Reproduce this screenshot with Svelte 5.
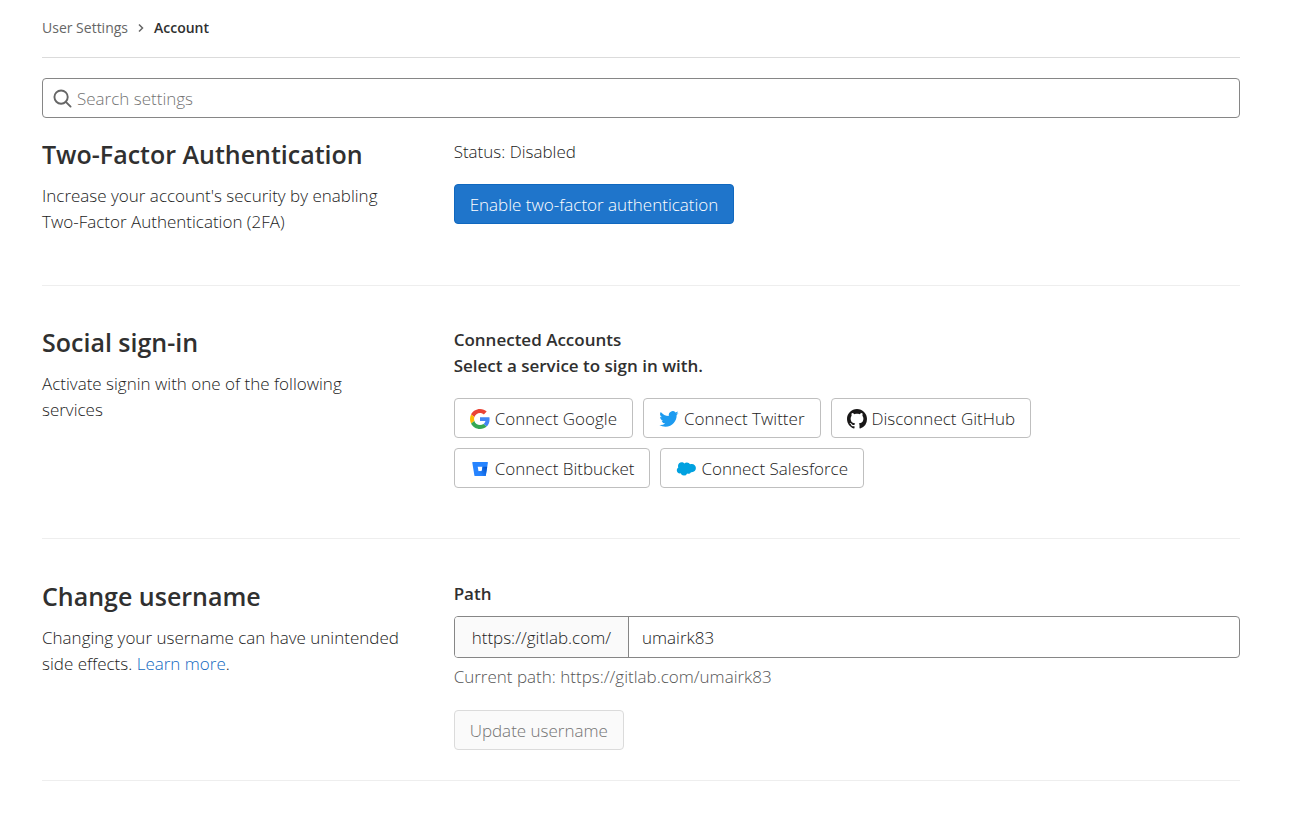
<script lang="ts">
	type Provider = {
		id: string;
		label: string;
	};

	const providers: Provider[] = [
		{ id: "google", label: "Connect Google" },
		{ id: "twitter", label: "Connect Twitter" },
		{ id: "github", label: "Disconnect GitHub" },
		{ id: "bitbucket", label: "Connect Bitbucket" },
		{ id: "salesforce", label: "Connect Salesforce" },
	];

	const rootUrl = "https://gitlab.com/";
	const currentUsername = "umairk83";

	let search = $state("");
	let username = $state(currentUsername);
	const unchanged = $derived(username === currentUsername);
</script>

{#snippet logo(id: string)}
	{#if id === "google"}
		<svg class="logo" viewBox="0 0 48 48" aria-hidden="true">
			<path fill="#ea4335" d="M24 9.5c3.54 0 6.71 1.22 9.21 3.6l6.85-6.85C35.9 2.38 30.47 0 24 0 14.62 0 6.51 5.38 2.56 13.22l7.98 6.19C12.43 13.72 17.74 9.5 24 9.5z" />
			<path fill="#4285f4" d="M46.98 24.55c0-1.57-.15-3.09-.38-4.55H24v9.02h12.94c-.58 2.96-2.26 5.48-4.78 7.18l7.73 6c4.51-4.18 7.09-10.36 7.09-17.65z" />
			<path fill="#fbbc05" d="M10.53 28.59c-.48-1.45-.76-2.99-.76-4.59s.27-3.14.76-4.59l-7.98-6.19C.92 16.46 0 20.12 0 24c0 3.88.92 7.54 2.56 10.78l7.97-6.19z" />
			<path fill="#34a853" d="M24 48c6.48 0 11.93-2.13 15.89-5.81l-7.73-6c-2.15 1.45-4.92 2.3-8.16 2.3-6.26 0-11.57-4.22-13.47-9.91l-7.98 6.19C6.51 42.62 14.62 48 24 48z" />
		</svg>
	{:else if id === "twitter"}
		<svg class="logo" viewBox="-0.5 -0.5 25 25" aria-hidden="true">
			<path fill="#1d9bf0" d="M23.95 4.57a10 10 0 0 1-2.82.77 4.96 4.96 0 0 0 2.16-2.72c-.95.56-2 .96-3.13 1.18a4.92 4.92 0 0 0-8.38 4.48C7.69 8.1 4.07 6.13 1.64 3.16a4.92 4.92 0 0 0 1.52 6.57 4.9 4.9 0 0 1-2.23-.61v.06a4.92 4.92 0 0 0 3.95 4.83 5 5 0 0 1-2.21.08 4.94 4.94 0 0 0 4.6 3.42A9.87 9.87 0 0 1 0 19.54a13.99 13.99 0 0 0 7.55 2.21c9.05 0 14-7.5 14-13.98 0-.21 0-.42-.02-.63a9.94 9.94 0 0 0 2.42-2.57z" />
		</svg>
	{:else if id === "github"}
		<svg class="logo" viewBox="0 0 16 16" aria-hidden="true">
			<path fill="#191717" d="M8 0C3.58 0 0 3.58 0 8c0 3.54 2.29 6.53 5.47 7.59.4.07.55-.17.55-.38 0-.19-.01-.82-.01-1.49-2.01.37-2.53-.49-2.69-.94-.09-.23-.48-.94-.82-1.13-.28-.15-.68-.52-.01-.53.63-.01 1.08.58 1.23.82.72 1.21 1.87.87 2.33.66.07-.52.28-.87.51-1.07-1.78-.2-3.64-.89-3.64-3.95 0-.87.31-1.59.82-2.15-.08-.2-.36-1.02.08-2.12 0 0 .67-.21 2.2.82.64-.18 1.32-.27 2-.27s1.36.09 2 .27c1.53-1.04 2.2-.82 2.2-.82.44 1.1.16 1.92.08 2.12.51.56.82 1.27.82 2.15 0 3.07-1.87 3.75-3.65 3.95.29.25.54.73.54 1.48 0 1.07-.01 1.93-.01 2.2 0 .21.15.46.55.38A8.01 8.01 0 0 0 16 8c0-4.42-3.58-8-8-8z" />
		</svg>
	{:else if id === "bitbucket"}
		<svg class="logo" viewBox="0 0 20 20" aria-hidden="true">
			<defs>
				<linearGradient id="bucket-shade" x1="17" y1="7" x2="9" y2="14" gradientUnits="userSpaceOnUse">
					<stop offset="0.15" stop-color="#0052cc" />
					<stop offset="1" stop-color="#2684ff" />
				</linearGradient>
			</defs>
			<path fill="#2684ff" d="M2.8 3h14.6c.4 0 .6.3.5.7l-2.1 12.7c0 .4-.3.6-.7.6H5.2c-.4 0-.7-.3-.8-.6L2.3 3.7c-.1-.4.1-.7.5-.7zm5.7 9.2h3.2l.8-4.5H7.7z" />
			<path fill="url(#bucket-shade)" d="M17.2 7.7h-4.7l-.8 4.5H8.5l-3.7 4.6c.1.1.3.2.5.2h9.8c.4 0 .7-.2.7-.6z" />
		</svg>
	{:else}
		<svg class="logo" viewBox="0 0 20 20" aria-hidden="true">
			<path fill="#00a1e0" d="M8.3 4.5A3.6 3.6 0 0 1 10.9 3.4c1.4 0 2.6.8 3.2 1.9.5-.2 1.1-.4 1.7-.4 2.3 0 4.1 1.9 4.1 4.2s-1.8 4.2-4.1 4.2l-.8-.1a3 3 0 0 1-3.9 1.2 3.4 3.4 0 0 1-6.4-.1l-.7.1A3.3 3.3 0 0 1 .8 11.2c0-1.2.6-2.2 1.5-2.8-.2-.4-.3-.9-.3-1.4 0-2.1 1.7-3.7 3.7-3.7 1.1 0 2.1.5 2.6 1.2z" />
		</svg>
	{/if}
{/snippet}

<main class="page">
	<nav class="breadcrumbs" aria-label="Breadcrumbs">
		<a class="crumb" href="#profile">User Settings</a>
		<svg class="chevron" viewBox="0 0 10 10" aria-hidden="true">
			<path d="M3 1.5 6.5 5 3 8.5" />
		</svg>
		<a class="crumb current" href="#account" aria-current="page">Account</a>
	</nav>

	<div class="search">
		<svg class="search-icon" viewBox="0 0 20 20" aria-hidden="true">
			<circle cx="8.5" cy="8.5" r="7" />
			<path d="m13.5 13.5 5 5" />
		</svg>
		<input type="search" placeholder="Search settings" aria-label="Search settings" bind:value={search} />
	</div>

	<section class="settings">
		<div class="intro">
			<h4>Two-Factor Authentication</h4>
			<p>Increase your account's security by enabling Two-Factor Authentication (2FA)</p>
		</div>
		<div class="content">
			<p class="status">Status: Disabled</p>
			<button class="btn confirm" type="button">Enable two-factor authentication</button>
		</div>
	</section>

	<section class="settings">
		<div class="intro">
			<h4>Social sign-in</h4>
			<p>Activate signin with one of the following services</p>
		</div>
		<div class="content">
			<p class="label">Connected Accounts</p>
			<p class="label">Select a service to sign in with.</p>
			<div class="providers">
				{#each providers as provider (provider.id)}
					<button class="btn" type="button">
						{@render logo(provider.id)}
						{provider.label}
					</button>
				{/each}
			</div>
		</div>
	</section>

	<section class="settings last">
		<div class="intro">
			<h4>Change username</h4>
			<p>Changing your username can have unintended side effects. <a href="#learn-more">Learn more</a>.</p>
		</div>
		<form class="content" onsubmit={(e) => e.preventDefault()}>
			<label class="label" for="username">Path</label>
			<div class="input-group">
				<span class="prepend">{rootUrl}</span>
				<input id="username" type="text" bind:value={username} />
			</div>
			<p class="help">Current path: {rootUrl}{currentUsername}</p>
			<button class="btn" type="submit" disabled={unchanged}>Update username</button>
		</form>
	</section>
</main>

<style>
	:global(body) {
		margin: 0;
		background: #fff;
	}

	.page {
		padding: 0 71px 20px 42px;
		color: #222;
		font-family: "Segoe UI", "Open Sans", "Noto Sans", sans-serif;
		font-size: 17px;
		font-weight: 300;
		line-height: 26px;
	}

	p,
	h4 {
		margin: 0;
	}

	.breadcrumbs {
		display: flex;
		align-items: center;
		padding: 15px 0 16px;
		margin-bottom: 20px;
		border-bottom: 1px solid #dbdbdb;
		font-size: 14px;
		font-weight: 400;
	}

	.crumb {
		color: #666;
		text-decoration: none;
	}

	.crumb.current {
		color: #303030;
		font-weight: 600;
	}

	.chevron {
		width: 10px;
		height: 10px;
		margin: 0 8px;
		fill: none;
		stroke: #666;
		stroke-width: 1.5;
	}

	.search {
		display: flex;
		align-items: center;
		gap: 5px;
		height: 38px;
		padding: 0 10px;
		border: 1px solid #868686;
		border-radius: 4px;
	}

	.search-icon {
		flex: none;
		width: 19px;
		height: 19px;
		fill: none;
		stroke: #666;
		stroke-width: 2;
		stroke-linecap: round;
	}

	input {
		flex: 1;
		min-width: 0;
		padding: 2px 0 0;
		border: 0;
		outline: 0;
		background: none;
		color: #222;
		font: inherit;
	}

	input::placeholder {
		color: #737373;
		opacity: 1;
	}

	.settings {
		display: flex;
		gap: 50px;
		padding: 41px 0 50px;
		border-bottom: 1px solid #eee;
	}

	.search + .settings {
		padding-top: 21px;
	}

	.settings.last {
		padding: 42px 0 30px;
	}

	.intro {
		flex: none;
		width: calc((100% + 40px) / 3 - 51px);
	}

	.content {
		flex: 1;
		min-width: 0;
	}

	h4 {
		margin-bottom: 14px;
		color: #303030;
		font-size: 25px;
		font-weight: 600;
		line-height: 30px;
	}

	.intro a {
		color: #1068bf;
		text-decoration: none;
	}

	.status {
		margin-bottom: 19px;
	}

	.label {
		display: block;
		color: #303030;
		font-weight: 600;
	}

	.btn {
		display: inline-flex;
		align-items: center;
		gap: 5px;
		height: 40px;
		padding: 1px 15px 0;
		border: 1px solid #bfbfbf;
		border-radius: 4px;
		background: #fff;
		color: #222;
		font: inherit;
		white-space: nowrap;
		cursor: pointer;
	}

	.btn.confirm {
		border-color: #1068bf;
		background: #1f75cb;
		color: #fff;
	}

	.btn:disabled {
		border-color: #dbdbdb;
		background: #fafafa;
		color: #737373;
		cursor: not-allowed;
	}

	.providers {
		display: flex;
		flex-wrap: wrap;
		gap: 10px;
		max-width: 600px;
		margin-top: 19px;
	}

	.logo {
		width: 20px;
		height: 20px;
	}

	.input-group {
		display: flex;
		height: 40px;
		margin: 9px 0 6px;
		border: 1px solid #868686;
		border-radius: 4px;
		overflow: hidden;
	}

	.prepend {
		display: flex;
		align-items: center;
		padding: 2px 17px 0;
		border-right: 1px solid #868686;
		background: #fafafa;
	}

	.input-group input {
		padding: 2px 13px 0;
	}

	.help {
		margin-bottom: 20px;
		color: #555;
	}
</style>
